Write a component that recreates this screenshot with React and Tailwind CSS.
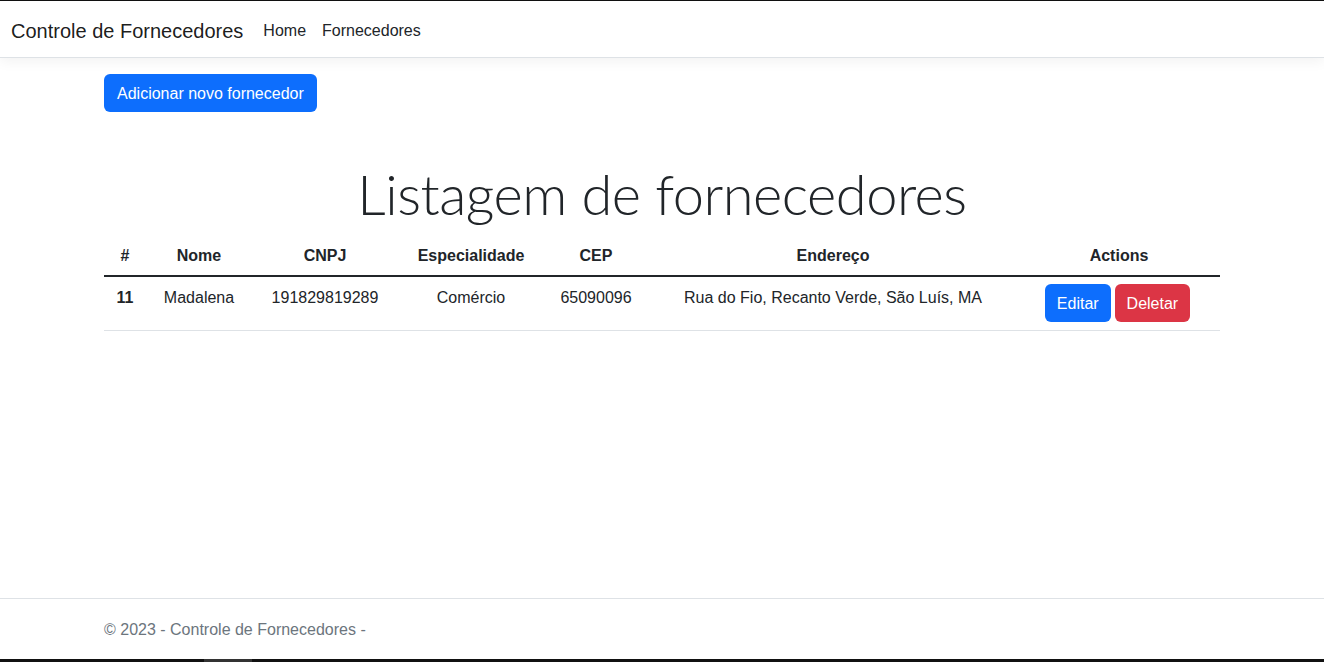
import React from 'react';

const fornecedores = [
  { id: 11, nome: 'Madalena', cnpj: '191829819289', especialidade: 'Comércio', cep: '65090096', endereco: 'Rua do Fio, Recanto Verde, São Luís, MA' },
];

const Navbar = () => (
  <nav className="h-[57px] pt-1 bg-white border-b border-[#dee2e6] shadow-[0_4px_12px_rgba(0,0,0,0.05)] flex items-center pl-[11px] pr-3 relative z-10">
    <a className="text-[20px] leading-[30px] text-black/90 mr-3">Controle de Fornecedores</a>
    <ul className="flex text-[16px] leading-6 text-[#212529]">
      <li><a className="px-2 py-2 block">Home</a></li>
      <li><a className="px-2 py-2 block">Fornecedores</a></li>
    </ul>
  </nav>
);

const FornecedoresTable = ({ items }) => (
  <table className="w-full table-fixed border-collapse text-[16px] leading-6 text-[#212529] text-center">
    <thead>
      <tr className="font-bold">
        <th className="w-[42px] pt-[9px] pb-[7px] px-2">#</th>
        <th className="w-[106px] pt-[9px] pb-[7px] px-2">Nome</th>
        <th className="w-[146px] pt-[9px] pb-[7px] px-2">CNPJ</th>
        <th className="w-[146px] pt-[9px] pb-[7px] px-2">Especialidade</th>
        <th className="w-[104px] pt-[9px] pb-[7px] px-2">CEP</th>
        <th className="w-[370px] pt-[9px] pb-[7px] px-2">Endereço</th>
        <th className="w-[202px] pt-[9px] pb-[7px] px-2">Actions</th>
      </tr>
    </thead>
    <tbody className="border-t-2 border-[#212529]">
      {items.map((f) => (
        <tr key={f.id} className="border-b border-[#dee2e6] align-top">
          <td className="pt-[9px] px-2 pb-2 font-bold">{f.id}</td>
          <td className="pt-[9px] px-2 pb-2">{f.nome}</td>
          <td className="pt-[9px] px-2 pb-2">{f.cnpj}</td>
          <td className="pt-[9px] px-2 pb-2">{f.especialidade}</td>
          <td className="pt-[9px] px-2 pb-2">{f.cep}</td>
          <td className="pt-[9px] px-2 pb-2">{f.endereco}</td>
          <td className="pt-[7px] px-2 pb-2">
            <div className="flex justify-center gap-1 pr-[3px]">
              <button className="h-[38px] pt-px px-3 rounded-md bg-[#0d6efd] text-white">Editar</button>
              <button className="h-[38px] pt-px px-3 rounded-md bg-[#dc3545] text-white">Deletar</button>
            </div>
          </td>
        </tr>
      ))}
    </tbody>
  </table>
);

export default function App() {
  return (
    <div className="h-[662px] flex flex-col bg-white overflow-hidden font-['Liberation_Sans',Arial,sans-serif]">
      <div className="h-px bg-[#111]" />
      <Navbar />
      <main className="flex-1">
        <div className="w-[1116px] mx-auto pt-4">
          <button className="h-[38px] pt-px px-[13px] rounded-md bg-[#0d6efd] text-white text-[16px]">Adicionar novo fornecedor</button>
          <h1 className="mt-[48px] mb-2 text-center text-[56px] leading-[1.2] font-light tracking-[-0.5px] text-[#212529] font-['Lato',sans-serif]">
            Listagem de fornecedores
          </h1>
          <FornecedoresTable items={fornecedores} />
        </div>
      </main>
      <footer className="h-[61px] pt-px border-t border-[#dee2e6] text-[#6c757d] text-[16px] leading-[60px]">
        <div className="w-[1116px] mx-auto">© 2023 - Controle de Fornecedores -</div>
      </footer>
      <div className="h-[3px] flex bg-[#111]">
        <div className="w-[204px]" />
        <div className="w-[48px] bg-[#333]" />
      </div>
    </div>
  );
}
